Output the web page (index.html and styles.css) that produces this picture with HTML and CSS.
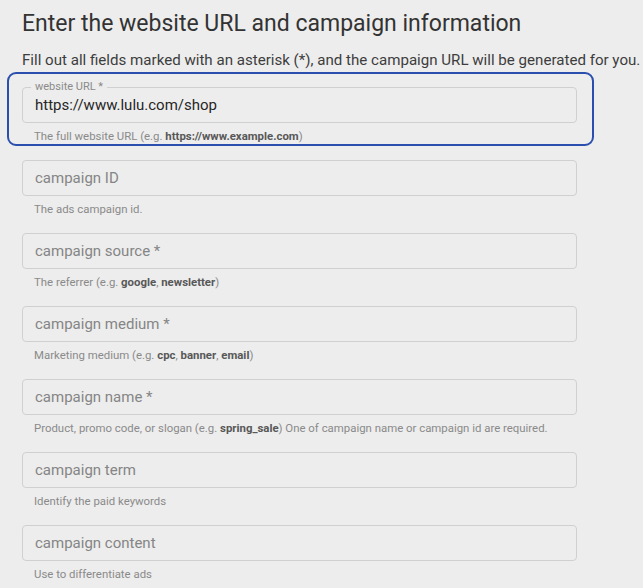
FILE: index.html
```html
<!DOCTYPE html>
<html>
<head>
<meta charset="utf-8">
<link rel="stylesheet" href="styles.css">
</head>
<body>
<div class="page">
  <h1 class="title">Enter the website URL and campaign information</h1>
  <p class="intro">Fill out all fields marked with an asterisk (*), and the campaign URL will be generated for you.</p>
  <div class="form">
    <div class="highlight">
      <div class="group">
        <div class="field filled">
          <span class="float-label">website URL *</span>
          <span class="value">https://www.lulu.com/shop</span>
        </div>
        <div class="help">The full website URL (e.g. <b>https://www.example.com</b>)</div>
      </div>
    </div>
    <div class="group">
      <div class="field"><span class="placeholder">campaign ID</span></div>
      <div class="help">The ads campaign id.</div>
    </div>
    <div class="group">
      <div class="field"><span class="placeholder">campaign source *</span></div>
      <div class="help">The referrer (e.g. <b>google</b>, <b>newsletter</b>)</div>
    </div>
    <div class="group">
      <div class="field"><span class="placeholder">campaign medium *</span></div>
      <div class="help">Marketing medium (e.g. <b>cpc</b>, <b>banner</b>, <b>email</b>)</div>
    </div>
    <div class="group">
      <div class="field"><span class="placeholder">campaign name *</span></div>
      <div class="help">Product, promo code, or slogan (e.g. <b>spring_sale</b>) One of campaign name or campaign id are required.</div>
    </div>
    <div class="group">
      <div class="field"><span class="placeholder">campaign term</span></div>
      <div class="help">Identify the paid keywords</div>
    </div>
    <div class="group">
      <div class="field"><span class="placeholder">campaign content</span></div>
      <div class="help">Use to differentiate ads</div>
    </div>
  </div>
</div>
</body>
</html>
```

FILE: styles.css
```css
html, body {
  margin: 0;
  padding: 0;
  background: #ededed;
}

body {
  font-family: Roboto, "Liberation Sans", Arial, sans-serif;
  color: #333;
}

.page {
  padding: 10px 0 0 22px;
}

.title {
  margin: 0;
  font-size: 23px;
  line-height: 28px;
  font-weight: 400;
  color: #333;
}

.intro {
  margin: 13px 0 0 0;
  font-size: 15.1px;
  line-height: 18px;
  color: #3d3d3d;
  white-space: nowrap;
}

.form {
  display: flex;
  flex-direction: column;
  margin-top: 3px;
}

.highlight {
  border: 2px solid #2b4fae;
  border-radius: 9px;
  margin: 0 0 14px -15px;
  width: 587px;
  height: 74px;
  padding: 13px 0 0 13px;
  box-sizing: border-box;
}

.highlight .group {
  height: auto;
}

.group {
  height: 73px;
  display: flex;
  flex-direction: column;
}

.field {
  position: relative;
  width: 555px;
  height: 36px;
  box-sizing: border-box;
  border: 1px solid #d0d0d0;
  border-radius: 4px;
  display: flex;
  align-items: center;
  padding: 0 12px;
  font-size: 15px;
}

.float-label {
  position: absolute;
  top: -7px;
  left: 8px;
  padding: 0 4px;
  background: #ededed;
  font-size: 11px;
  line-height: 12px;
  color: #8a8a8a;
}

.value {
  color: #262626;
}

.placeholder {
  color: #858585;
}

.help {
  margin-top: 6px;
  padding-left: 12px;
  font-size: 11.4px;
  line-height: 14px;
  color: #8a8a8a;
  white-space: nowrap;
}

.help b {
  font-weight: 700;
  color: #585858;
}
```
